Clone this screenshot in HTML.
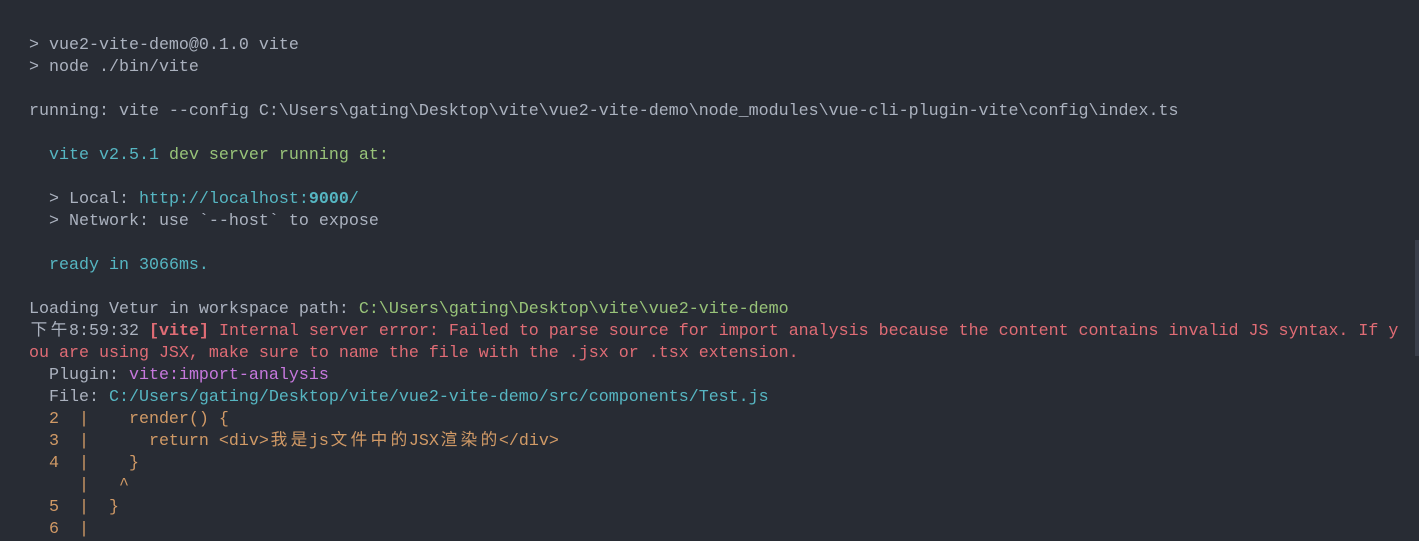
<!DOCTYPE html>
<html><head><meta charset="utf-8"><style>
html,body{margin:0;padding:0;background:#282c34;width:1419px;height:537px;overflow:hidden}
pre{margin:0;position:absolute;left:29px;top:35px;font-family:"Liberation Mono","Noto Sans CJK SC",monospace;font-size:16.67px;line-height:22px;color:#abb2bf;white-space:pre}
.c{display:inline-block;width:20px;text-align:center}
.g{color:#98c379}.r{color:#e06c75}.p{color:#c678dd}.cy{color:#56b6c2}.o{color:#d19a66}.b{font-weight:bold}
.sb{position:absolute;left:1415px;top:240px;width:4px;height:116px;background:#3a3f4b}
</style></head><body>
<pre>&gt; vue2-vite-demo@0.1.0 vite
&gt; node ./bin/vite

running: vite --config C:\Users\gating\Desktop\vite\vue2-vite-demo\node_modules\vue-cli-plugin-vite\config\index.ts

  <span class="cy">vite v2.5.1</span> <span class="g">dev server running at:</span>

  &gt; Local: <span class="cy">http://localhost:<b>9000</b>/</span>
  &gt; Network: use `--host` to expose

  <span class="cy">ready in 3066ms.</span>

Loading Vetur in workspace path: <span class="g">C:\Users\gating\Desktop\vite\vue2-vite-demo</span>
<span class="c">下</span><span class="c">午</span>8:59:32 <span class="r b">[vite]</span> <span class="r">Internal server error: Failed to parse source for import analysis because the content contains invalid JS syntax. If y</span>
<span class="r">ou are using JSX, make sure to name the file with the .jsx or .tsx extension.</span>
  Plugin: <span class="p">vite:import-analysis</span>
  File: <span class="cy">C:/Users/gating/Desktop/vite/vue2-vite-demo/src/components/Test.js</span>
<span class="o">  2  |    render() {
  3  |      return &lt;div&gt;<span class="c">我</span><span class="c">是</span>js<span class="c">文</span><span class="c">件</span><span class="c">中</span><span class="c">的</span>JSX<span class="c">渲</span><span class="c">染</span><span class="c">的</span>&lt;/div&gt;
  4  |    }
     |   ^
  5  |  }
  6  |</span></pre>
<div class="sb"></div>
</body></html>
